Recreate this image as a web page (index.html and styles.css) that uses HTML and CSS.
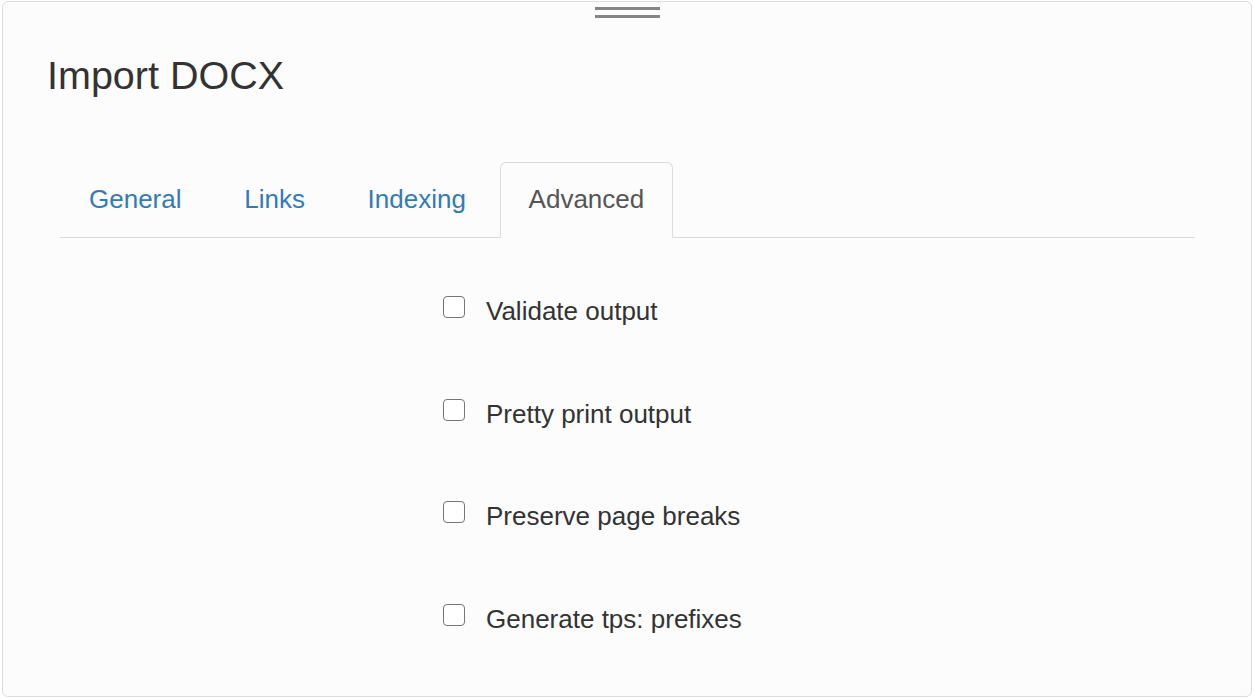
FILE: index.html
```html
<!DOCTYPE html>
<html lang="en">
  <head>
    <meta charset="UTF-8" />
    <title>Import DOCX</title>
    <link rel="stylesheet" href="styles.css">
  </head>
  <body>
    <div class="panel">
      <div class="handle">
        <span></span>
        <span></span>
      </div>
      <h3 class="title">Import DOCX</h3>

      <div class="tabs">
        <ul class="nav">
          <li><a href="#">General</a></li>
          <li><a href="#">Links</a></li>
          <li><a href="#">Indexing</a></li>
          <li class="active"><a href="#">Advanced</a></li>
        </ul>

        <div class="tab-content">
          <label class="check"><input type="checkbox" /> Validate output</label>
          <label class="check"><input type="checkbox" /> Pretty print output</label>
          <label class="check"><input type="checkbox" /> Preserve page breaks</label>
          <label class="check"><input type="checkbox" /> Generate tps: prefixes</label>
        </div>
      </div>
    </div>
  </body>
</html>
```

FILE: styles.css
```css
* {
  margin: 0;
  padding: 0;
  box-sizing: border-box;
  font-family: 'Liberation Sans', Arial, sans-serif;
}
body {
  background: #fff;
  padding: 1px 2px;
}

.panel {
  height: 696px;
  background: #fcfcfc;
  border: 1px solid #ddd;
  border-radius: 6px;
  padding: 0 40px;
  overflow: hidden;
}

.handle {
  width: 65px;
  margin: 5px auto 0;
  display: flex;
  flex-direction: column;
  gap: 5px;
}
.handle span {
  display: block;
  height: 3px;
  background: #858585;
}

.title {
  margin: 36px 0 0 4px;
  font-size: 39.5px;
  font-weight: normal;
  line-height: 1.1;
  color: #333;
}

.tabs {
  margin: 65px 16px 0 17px;
}

.nav {
  list-style: none;
  display: flex;
  border-bottom: 1px solid #ddd;
}
.nav li {
  margin-right: 4.7px;
  margin-bottom: -1px;
}
.nav a {
  display: block;
  padding: 17px 28px 19px;
  font-size: 26px;
  line-height: 38px;
  color: #337ab7;
  text-decoration: none;
  border: 1px solid transparent;
  border-radius: 6px 6px 0 0;
}
.nav .active a {
  color: #555;
  background: #fcfcfc;
  border-color: #ddd;
  border-bottom-color: transparent;
}

.tab-content {
  padding: 55px 0 0 383px;
}

.check {
  display: flex;
  align-items: flex-start;
  font-size: 26px;
  line-height: 37px;
  color: #333;
  margin-bottom: 65.5px;
  cursor: pointer;
}
.check input {
  appearance: none;
  width: 22px;
  height: 22px;
  margin: 3px 21px 0 0;
  border: 1.5px solid #767676;
  border-radius: 4px;
  background: #fff;
}
```
